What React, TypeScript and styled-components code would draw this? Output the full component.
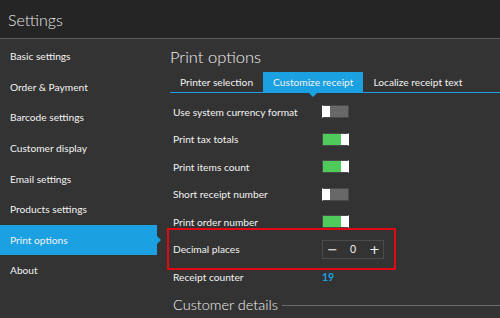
import React from 'react';
import styled, { createGlobalStyle } from 'styled-components';

const GlobalStyle = createGlobalStyle`
  html, body {
    margin: 0;
    padding: 0;
    background: #333333;
    overflow: hidden;
  }
  body {
    font-family: Lato, "Open Sans", sans-serif;
    color: #f0f0f0;
  }
`;

const Window = styled.div`
  width: 500px;
  height: 318px;
  display: flex;
  flex-direction: column;
  background: #333333;
  overflow: hidden;
`;

const TitleBar = styled.div`
  height: 38px;
  flex: 0 0 38px;
  display: flex;
  align-items: center;
  padding-left: 8px;
  background: #252525;
  border-bottom: 1px solid #5c5c5c;
  font-size: 16px;
  font-weight: 300;
  color: #e8e8e8;
`;

const Body = styled.div`
  flex: 1;
  display: flex;
  min-height: 0;
`;

const Sidebar = styled.nav`
  width: 157px;
  flex: 0 0 157px;
  padding-top: 2px;
  display: flex;
  flex-direction: column;
`;

const NavItem = styled.div<{ $active?: boolean }>`
  position: relative;
  height: 30.6px;
  display: flex;
  align-items: center;
  padding-left: 10px;
  font-size: 10.2px;
  color: #f2f2f2;
  background: ${({ $active }) => ($active ? '#1ba1e2' : 'transparent')};

  &::after {
    content: "";
    display: ${({ $active }) => ($active ? 'block' : 'none')};
    position: absolute;
    right: -4px;
    top: 50%;
    transform: translateY(-50%);
    border-top: 4px solid transparent;
    border-bottom: 4px solid transparent;
    border-left: 4px solid #1ba1e2;
  }
`;

const Content = styled.main`
  flex: 1;
  padding-left: 13px;
  display: flex;
  flex-direction: column;
  min-width: 0;
`;

const PageTitle = styled.h1`
  margin: 6px 0 0 0;
  height: 27px;
  font-size: 16.5px;
  font-weight: 300;
  color: #f2f2f2;
  line-height: 24px;
`;

const Tabs = styled.div`
  display: flex;
  height: 20px;
  border-bottom: 1.5px solid #1ba1e2;
`;

const Tab = styled.div<{ $active?: boolean }>`
  position: relative;
  display: flex;
  align-items: center;
  padding: 0 10px;
  font-size: 10.2px;
  color: #f2f2f2;
  background: ${({ $active }) => ($active ? '#1ba1e2' : 'transparent')};

  &::after {
    content: "";
    display: ${({ $active }) => ($active ? 'block' : 'none')};
    position: absolute;
    left: 50%;
    bottom: -5px;
    transform: translateX(-50%);
    border-left: 4px solid transparent;
    border-right: 4px solid transparent;
    border-top: 4px solid #1ba1e2;
  }
`;

const Rows = styled.div`
  display: flex;
  flex-direction: column;
  padding-top: 5px;
  padding-left: 3px;
`;

const Row = styled.div`
  position: relative;
  height: 27.5px;
  display: flex;
  align-items: center;
`;

const Label = styled.div`
  width: 149px;
  font-size: 10.2px;
  color: #f2f2f2;
`;

const Switch = styled.div<{ $on: boolean }>`
  width: 27px;
  height: 13px;
  box-sizing: border-box;
  display: flex;
  justify-content: ${({ $on }) => ($on ? 'flex-end' : 'flex-start')};
  background: ${({ $on }) => ($on ? '#4fcb5c' : '#686868')};
  border: 1px solid #4a4a4a;
  border-left-color: ${({ $on }) => ($on ? '#4a4a4a' : '#ffffff')};
  border-right-color: ${({ $on }) => ($on ? '#ffffff' : '#4a4a4a')};

  &::before {
    content: "";
    width: 7px;
    height: 100%;
    background: #ffffff;
  }
`;

const Stepper = styled.div`
  width: 62px;
  height: 19px;
  box-sizing: border-box;
  border: 1px solid #4b4b4b;
  display: flex;
  align-items: center;
  justify-content: space-between;
  padding: 0 4px;
  color: #f2f2f2;
`;

const StepButton = styled.span`
  font-family: "DejaVu Sans", sans-serif;
  font-size: 13px;
  line-height: 1;
  width: 10px;
  text-align: center;
`;

const StepValue = styled.span`
  font-size: 10.5px;
`;

const Highlight = styled.div`
  position: absolute;
  left: -6px;
  top: -8px;
  width: 229px;
  height: 42px;
  box-sizing: border-box;
  border: 2px solid #e30613;
  pointer-events: none;
`;

const Counter = styled.div`
  font-size: 10.5px;
  font-weight: 700;
  color: #1ba1e2;
`;

const Section = styled.div`
  display: flex;
  align-items: center;
  gap: 4px;
  margin-top: 5px;
  font-size: 14.5px;
  font-weight: 300;
  color: #f2f2f2;

  &::after {
    content: "";
    flex: 1;
    height: 1px;
    background: #6a6a6a;
    margin-top: 3px;
  }
`;

const navItems = [
  'Basic settings',
  'Order & Payment',
  'Barcode settings',
  'Customer display',
  'Email settings',
  'Products settings',
  'Print options',
  'About',
];

const toggles = [
  { label: 'Use system currency format', on: false },
  { label: 'Print tax totals', on: true },
  { label: 'Print items count', on: true },
  { label: 'Short receipt number', on: false },
  { label: 'Print order number', on: true },
];

const App: React.FC = () => {
  return (
    <>
      <GlobalStyle />
      <Window>
        <TitleBar>Settings</TitleBar>
        <Body>
          <Sidebar>
            {navItems.map((item) => (
              <NavItem key={item} $active={item === 'Print options'}>
                {item}
              </NavItem>
            ))}
          </Sidebar>
          <Content>
            <PageTitle>Print options</PageTitle>
            <Tabs>
              <Tab>Printer selection</Tab>
              <Tab $active>Customize receipt</Tab>
              <Tab>Localize receipt text</Tab>
            </Tabs>
            <Rows>
              {toggles.map((t) => (
                <Row key={t.label}>
                  <Label>{t.label}</Label>
                  <Switch $on={t.on} />
                </Row>
              ))}
              <Row>
                <Highlight />
                <Label>Decimal places</Label>
                <Stepper>
                  <StepButton>−</StepButton>
                  <StepValue>0</StepValue>
                  <StepButton>+</StepButton>
                </Stepper>
              </Row>
              <Row>
                <Label>Receipt counter</Label>
                <Counter>19</Counter>
              </Row>
              <Section>Customer details</Section>
            </Rows>
          </Content>
        </Body>
      </Window>
    </>
  );
};

export default App;
